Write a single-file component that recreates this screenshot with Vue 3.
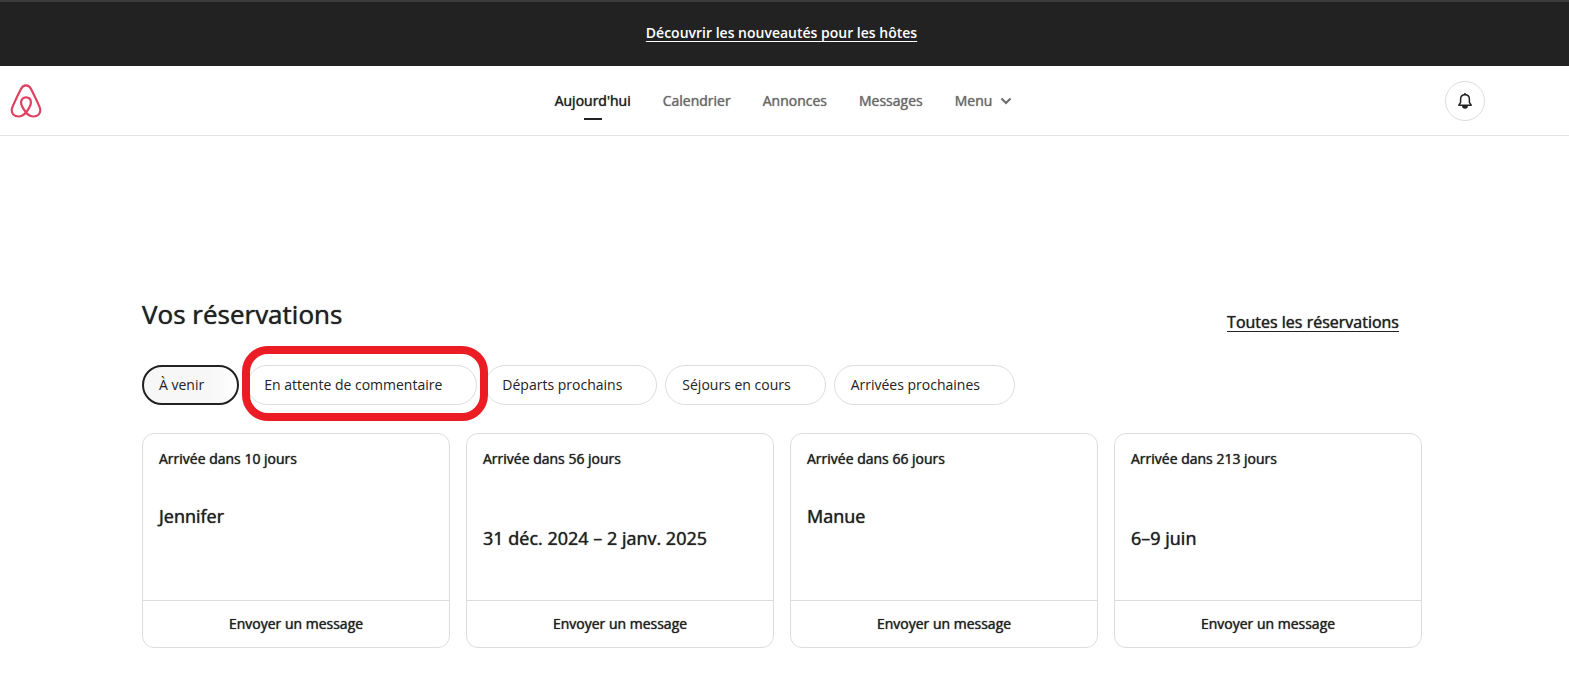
<script setup>
import { ref } from 'vue'

const links = ['Calendrier', 'Annonces', 'Messages']
const filters = [
  { id: 'upcoming', label: 'À venir' },
  { id: 'review', label: 'En attente de commentaire', highlighted: true },
  { id: 'leaving', label: 'Départs prochains' },
  { id: 'ongoing', label: 'Séjours en cours' },
  { id: 'arriving', label: 'Arrivées prochaines' },
]
const active = ref('upcoming')
const cards = [
  { status: 'Arrivée dans 10 jours', guest: 'Jennifer' },
  { status: 'Arrivée dans 56 jours', dates: '31 déc. 2024 – 2 janv. 2025' },
  { status: 'Arrivée dans 66 jours', guest: 'Manue' },
  { status: 'Arrivée dans 213 jours', dates: '6–9 juin' },
]
</script>

<template>
  <div class="page">
    <div class="banner"><a href="#">Découvrir les nouveautés pour les hôtes</a></div>
    <header class="header">
      <a class="logo" href="#" aria-label="Airbnb">
        <svg width="32" height="34" viewBox="0 0 32 34" fill="none" stroke="#e0405f" stroke-width="2.200" stroke-linejoin="round">
          <path d="M16 28.500C12.900 24.600 11.100 21.600 11.100 18.600C11.100 15.300 13.200 13.400 16 13.400S20.900 15.300 20.900 18.600C20.900 21.600 19.100 24.600 16 28.500ZM16 28.500C13.400 31.500 11 32.500 8.300 32.500C4.500 32.500 1.700 29.900 1.700 26.300C1.700 24.900 2.100 23.700 2.800 22.100C5.100 16.900 8.300 10.200 11.100 4.800C12.400 2.300 13.800 1.300 16 1.300S19.600 2.300 20.900 4.800C23.700 10.200 26.900 16.900 29.200 22.100C29.900 23.700 30.300 24.900 30.300 26.300C30.300 29.900 27.500 32.500 23.700 32.500C21 32.500 18.600 31.500 16 28.500Z" />
        </svg>
      </a>
      <nav class="nav">
        <a class="current" href="#">Aujourd'hui</a>
        <a v-for="l in links" :key="l" href="#">{{ l }}</a>
        <button type="button" class="menu">
          Menu
          <svg width="12" height="8" viewBox="0 0 12 8" fill="none" stroke="currentColor" stroke-width="2"><path d="M1.500 1.500L6 6L10.500 1.500" /></svg>
        </button>
      </nav>
      <button type="button" class="bell" aria-label="Notifications">
        <svg width="16" height="16" viewBox="0 0 16 16" fill="none" stroke="#222" stroke-width="1.500" stroke-linejoin="round">
          <path d="M8 1.700C5.400 1.700 3.600 3.500 3.600 6.100V9.300L1.800 12.200H14.200L12.400 9.300V6.100C12.400 3.500 10.600 1.700 8 1.700Z" />
          <path d="M5.800 12.800A2.200 2.200 0 0 0 10.200 12.800Z" fill="#222" />
          <path d="M7 1H9" />
        </svg>
      </button>
    </header>

    <main class="main">
      <div class="heading">
        <h1>Vos réservations</h1>
        <a href="#">Toutes les réservations</a>
      </div>
      <div class="filters">
        <button
          v-for="f in filters"
          :key="f.id"
          type="button"
          class="chip"
          :class="{ active: f.id === active, highlighted: f.highlighted }"
          :aria-pressed="f.id === active"
          @click="active = f.id"
        >{{ f.label }}</button>
      </div>
      <div class="cards">
        <article v-for="c in cards" :key="c.status" class="card">
          <div class="body">
            <p class="status">{{ c.status }}</p>
            <h2 class="guest">{{ c.guest }}</h2>
            <p class="dates">{{ c.dates }}</p>
          </div>
          <button type="button" class="message">Envoyer un message</button>
        </article>
      </div>
    </main>
  </div>
</template>

<style>
body { margin: 0; background: #fff; }
</style>

<style scoped>
.page {
  font-family: "Open Sans", "Liberation Sans", sans-serif;
  font-size: 14px;
  line-height: 20px;
  color: #222;
}
* { box-sizing: border-box; }
button { font: inherit; color: inherit; background: none; border: 0; padding: 0; cursor: pointer; }
a { color: inherit; text-decoration: none; }
h1, h2, p { margin: 0; }

/* Open Sans has no medium face: a tight shadow gives the regular one more weight */
.nav, .heading, .card { font-weight: 500; text-shadow: 0 0 1px currentColor; }

.banner {
  height: 66px;
  display: flex;
  align-items: center;
  justify-content: center;
  background: #222;
  border-top: 2px solid #3c3c3c;
  color: #fff;
  font-weight: 600;
  padding: 0 6px 2px 0;
}
.banner a { text-decoration: underline; text-underline-offset: 3px; }

.header {
  height: 70px;
  display: grid;
  grid-template-columns: 1fr auto 1fr;
  align-items: center;
  padding: 0 84px 0 10px;
  border-bottom: 1px solid #e3e3e3;
}
.logo { display: flex; }
.nav {
  display: flex;
  gap: 32px;
  margin-left: 72px;
  color: #6a6a6a;
}
.nav .current { color: #222; position: relative; }
.current::after {
  content: "";
  position: absolute;
  left: calc(50% - 9px);
  bottom: -9px;
  width: 18px;
  height: 2px;
  background: #222;
}
.menu { display: flex; align-items: center; gap: 8px; text-shadow: inherit; }
.bell {
  justify-self: end;
  width: 40px;
  height: 40px;
  display: flex;
  align-items: center;
  justify-content: center;
  border: 1px solid #ddd;
  border-radius: 50%;
}

.main { padding: 160px 147px 45px 142px; }
.heading {
  display: flex;
  justify-content: space-between;
  align-items: flex-end;
  padding-right: 23px;
}
h1 { font-size: 26px; line-height: 36px; font-weight: 500; }
.heading a { font-size: 16px; line-height: 20px; text-decoration: underline; text-underline-offset: 3px; }

.filters { display: flex; gap: 8px; margin: 33px 0 28px; }
.chip {
  position: relative;
  height: 40px;
  padding: 0 34px 0 16px;
  border: 1px solid #ddd;
  border-radius: 20px;
  text-align: left;
  white-space: nowrap;
}
.chip.active {
  border: 2px solid #222;
  padding: 0 33px 0 15px;
  background: linear-gradient(90deg, #f7f7f7 70%, #fff);
}
.highlighted { z-index: 1; }
.highlighted::after {
  content: "";
  position: absolute;
  inset: -20px -12px -17px -6px;
  border: 8px solid #ec1c24;
  border-radius: 26px;
}

.cards { display: grid; grid-template-columns: repeat(4, 1fr); gap: 16px; }
.card { border: 1px solid #ddd; border-radius: 12px; }
.body { padding: 15px 16px 12px; min-height: 166px; }
.guest, .dates { font-size: 18px; line-height: 22px; min-height: 22px; font-weight: 500; }
.guest { margin-top: 36px; }
.message {
  display: block;
  width: 100%;
  height: 47px;
  border-top: 1px solid #ddd;
  text-shadow: inherit;
}
</style>
